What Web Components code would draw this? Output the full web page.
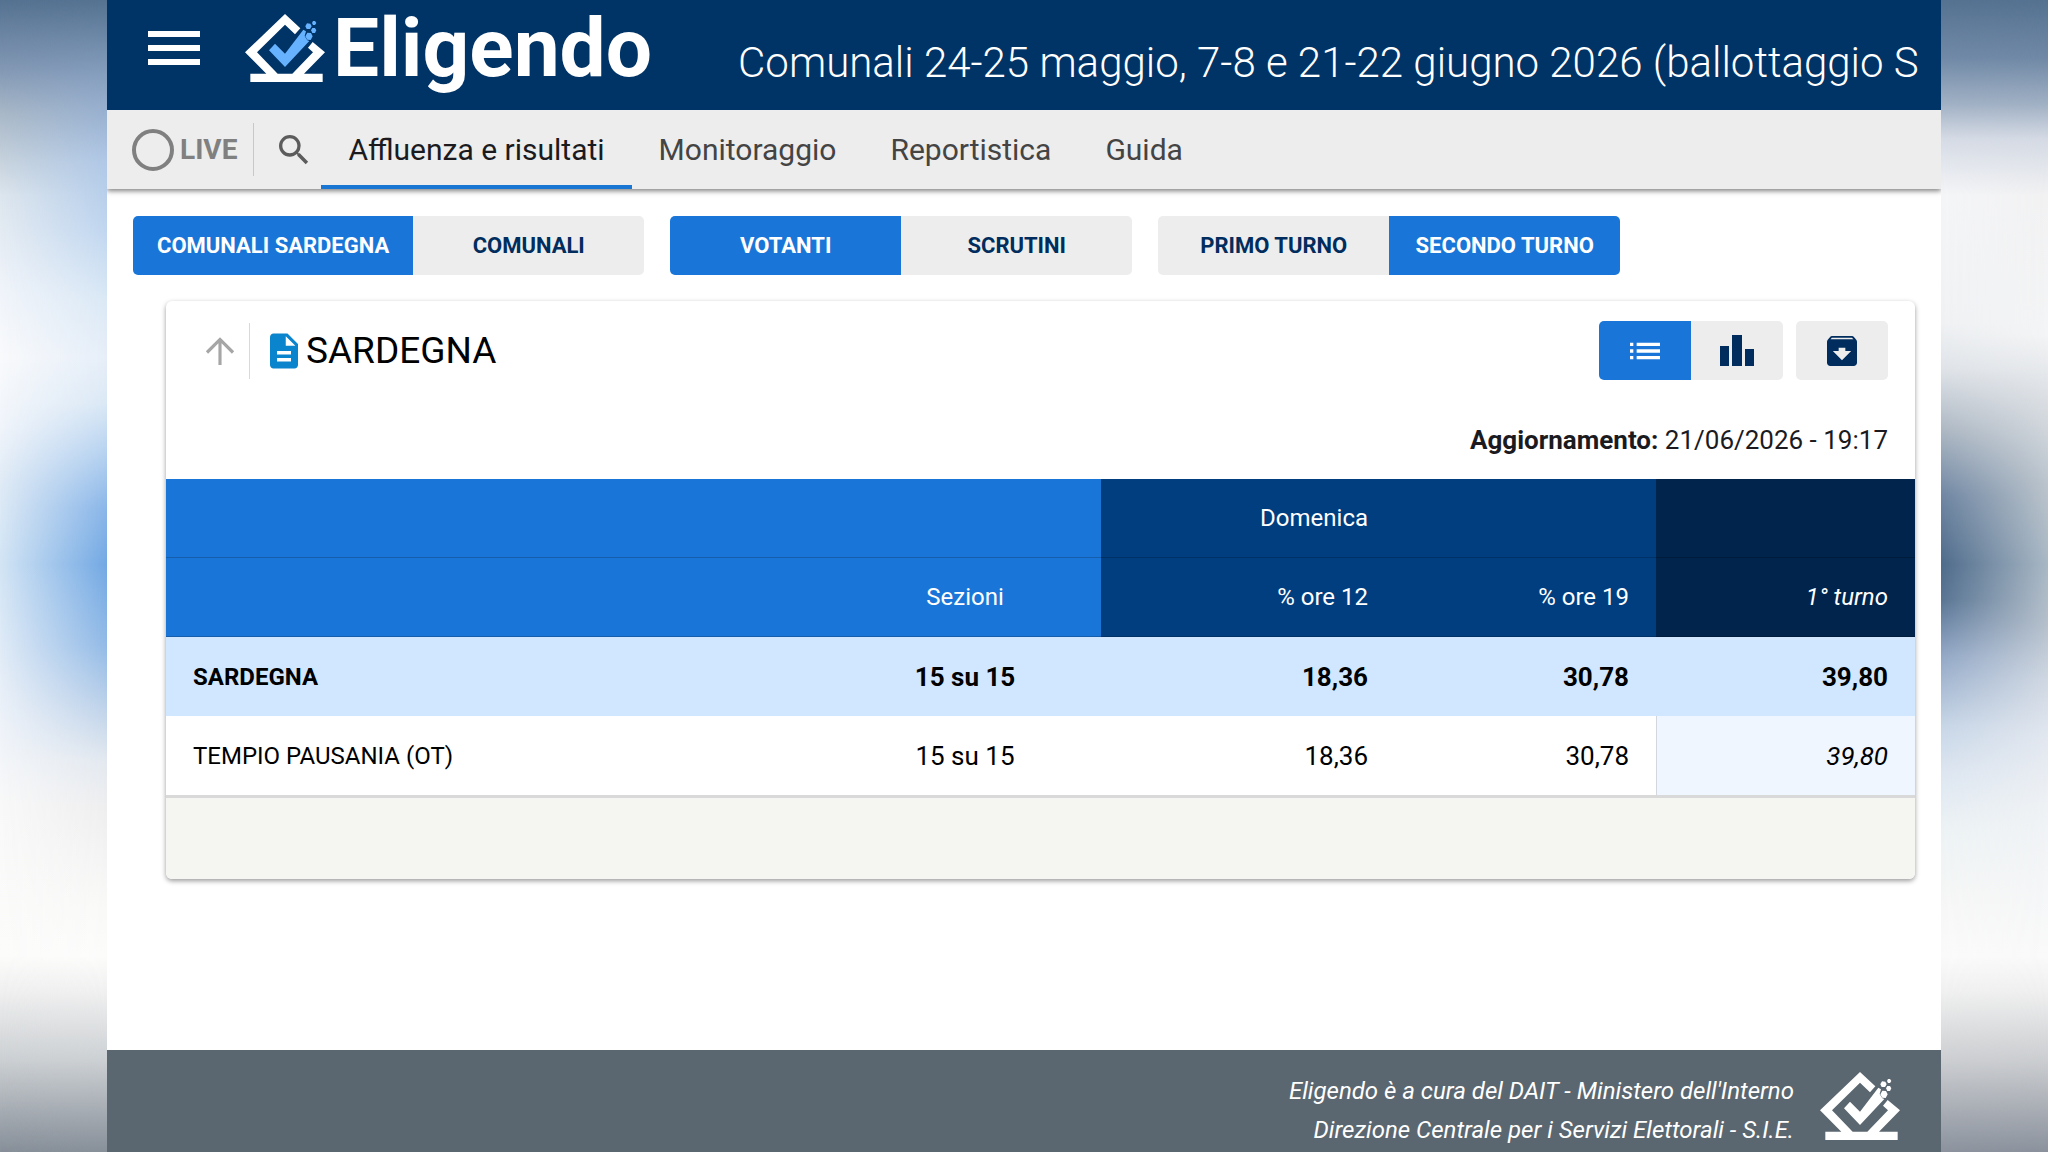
<!DOCTYPE html>
<html lang="it">
<head>
    <meta charset="utf-8">
    <meta name="viewport" content="width=device-width, initial-scale=1">
    <title>Eligendo</title>
    <style>
        body {
            margin: 0;
            font-family: Roboto, "Liberation Sans", sans-serif;
            font-size: 26px;
            color: #1b1b1f;
            background: #fff;
        }
    </style>
</head>
<body>
    <page-shell>
        <app-header slot="header" heading="Comunali 24-25 maggio, 7-8 e 21-22 giugno 2026 (ballottaggio S"></app-header>
        <nav-bar slot="nav">
            <nav-tab active>Affluenza e risultati</nav-tab>
            <nav-tab>Monitoraggio</nav-tab>
            <nav-tab>Reportistica</nav-tab>
            <nav-tab>Guida</nav-tab>
        </nav-bar>
        <filter-bar>
            <toggle-group>
                <toggle-button active>COMUNALI SARDEGNA</toggle-button>
                <toggle-button>COMUNALI</toggle-button>
            </toggle-group>
            <toggle-group>
                <toggle-button active>VOTANTI</toggle-button>
                <toggle-button>SCRUTINI</toggle-button>
            </toggle-group>
            <toggle-group>
                <toggle-button>PRIMO TURNO</toggle-button>
                <toggle-button active>SECONDO TURNO</toggle-button>
            </toggle-group>
        </filter-bar>
        <result-card heading="SARDEGNA" updated="21/06/2026 - 19:17">
            <turnout-table></turnout-table>
        </result-card>
        <app-footer slot="footer"></app-footer>
    </page-shell>

    <script>
        class PageShell extends HTMLElement {
            constructor() {
                super();
                this.attachShadow({ mode: "open" });
                this.shadowRoot.innerHTML = `
                <style>
                :host {
                    display: grid;
                    grid-template-columns: 107px minmax(0, 1fr) 107px;
                    min-height: 100vh;
                }
                .page {
                    display: flex;
                    flex-direction: column;
                    background: #fff;
                }
                main {
                    flex: 1;
                }
                </style>
                <side-glow side="left"></side-glow>
                <div class="page">
                    <slot name="header"></slot>
                    <slot name="nav"></slot>
                    <main><slot></slot></main>
                    <slot name="footer"></slot>
                </div>
                <side-glow side="right"></side-glow>
                `;
            }
        }

        // soft colour bands at both sides of the page: an outer gradient,
        // and an inner one that fades out away from the page
        class SideGlow extends HTMLElement {
            constructor() {
                super();
                this.attachShadow({ mode: "open" });
                this.shadowRoot.innerHTML = `
                <style>
                :host {
                    display: grid;
                    background: linear-gradient(#557291, #8298b4 6%, #aab9c8 10%, #dde6ee 17%, #f0f4fa 25%, #f9fafc 31%,
                        #f1f5fb 37%, #e0ebf6 42%, #d3e5f5 49%, #e0ebf7 56%, #eff3f9 63%, #f9f9f9 70%, #fcfcfb 83%,
                        #f0f0f0 86%, #ccd0d3 92%, #878f99);
                }
                .inner {
                    background: linear-gradient(#557291, #8aa2c2 7%, #b0c8e6 14%, #c0d6ef 20%, #dae8f5 26%, #e6eef8 31%,
                        #dae8f5 35%, #b8d3f0 39%, #8ab6e8 44%, #72a8e3 49%, #92bae6 56%, #bad0e9 61%, #e2e8ef 66%,
                        #eeeeef 70%, #f8f8f7 78%, #fcfcfb 83%, #f0f0f0 86%, #ccd0d3 92%, #878f99);
                    -webkit-mask-image: linear-gradient(to left, #000, transparent);
                    mask-image: linear-gradient(to left, #000, transparent);
                }
                :host([side="right"]) {
                    background: linear-gradient(#557291, #7089a6 5%, #a0b0c4 9%, #d4dae4 12%, #f2f2f3 17%, #f4f5f6 29%,
                        #dadee3 35%, #bcc5cd 42%, #a9b8c5 49%, #b5c0cc 54%, #d0d8e3 59%, #e3e8f0 64%, #eff2f5 70%,
                        #fafafa 83%, #f0f0f0 86%, #ccced1 92%, #8b929d);
                }
                :host([side="right"]) .inner {
                    background: linear-gradient(#557291, #7089a6 5%, #a0b0c4 9%, #d4dae4 12%, #f4f5f7 17%, #eff1f3 28%,
                        #dfe3e8 32%, #b0bac5 37%, #6f86a2 43%, #4e6b8b 49%, #587493 52%, #93a8c6 57%, #c6d5e6 63%,
                        #dce5f0 67%, #ecf2f4 72%, #f5f6f5 78%, #fafafa 83%, #f0f0f0 86%, #ccced1 92%, #8b929d);
                    -webkit-mask-image: linear-gradient(to right, #000, transparent);
                    mask-image: linear-gradient(to right, #000, transparent);
                }
                </style>
                <div class="inner"></div>
                `;
            }
        }

        class BrandMark extends HTMLElement {
            constructor() {
                super();
                this.attachShadow({ mode: "open" });
                this.shadowRoot.innerHTML = `
                <style>
                :host {
                    display: block;
                    width: 80px;
                    height: 68px;
                    flex: none;
                }
                svg {
                    display: block;
                    width: 100%;
                    height: 100%;
                }
                .tick {
                    fill: var(--tick-color, #fff);
                }
                </style>
                <svg viewBox="30 28 240 204" aria-hidden="true">
                    <path fill="#fff" d="M46 207H94L30 143 150 28 196 71 180 89 150 60 66 143 128 207H172L234 143 219 129 233 112 270 143 207 207H263V232H46Z"/>
                    <g class="tick">
                        <path d="M102 137 120 117 150 147 205 75 213 80 209 94 217 107 223 109 150 187Z"/>
                        <path d="M216 56 226 57 230 65 225 73 215 73 211 65Z"/>
                        <path d="M234 49 240 49 244 55 240 61 234 61 231 55Z"/>
                        <path d="M232 70 240 70 244 77 240 85 232 85 228 77Z"/>
                        <path d="M217 84 228 85 233 95 227 106 217 105 211 95Z"/>
                    </g>
                </svg>
                `;
            }
        }

        class AppHeader extends HTMLElement {
            constructor() {
                super();
                this.attachShadow({ mode: "open" });
                this.shadowRoot.innerHTML = `
                <style>
                :host {
                    display: block;
                    background: #003366;
                    color: #fff;
                }
                header {
                    display: flex;
                    align-items: center;
                    height: 110px;
                    padding: 0 20px 0 41px;
                    box-sizing: border-box;
                }
                button {
                    display: flex;
                    flex-direction: column;
                    gap: 8px;
                    width: 52px;
                    margin-right: 45px;
                    margin-bottom: 14px;
                    padding: 0;
                    border: 0;
                    background: none;
                    flex: none;
                }
                button span {
                    height: 6px;
                    background: #fff;
                }
                .brand {
                    display: flex;
                    align-items: center;
                    gap: 8px;
                    color: inherit;
                    text-decoration: none;
                    margin-bottom: 14px;
                }
                .brand b {
                    font-size: 82px;
                    line-height: 68px;
                }
                brand-mark {
                    --tick-color: #66b2ff;
                }
                h1 {
                    flex: 1;
                    min-width: 0;
                    margin: 16px 0 0 86px;
                    overflow: hidden;
                    white-space: nowrap;
                    font-size: 42px;
                    font-weight: 300;
                    line-height: 56px;
                }
                </style>
                <header>
                    <button type="button" aria-label="Menu"><span></span><span></span><span></span></button>
                    <a class="brand" href="#"><brand-mark></brand-mark><b>Eligendo</b></a>
                    <h1></h1>
                </header>
                `;
            }

            connectedCallback() {
                this.shadowRoot.querySelector("h1").textContent = this.getAttribute("heading");
            }
        }

        class NavBar extends HTMLElement {
            constructor() {
                super();
                this.attachShadow({ mode: "open" });
                this.shadowRoot.innerHTML = `
                <style>
                :host {
                    display: block;
                    background: #ededed;
                    box-shadow: 0 2px 5px rgba(0,0,0,0.5);
                    clip-path: inset(0 0 -10px 0);
                }
                nav {
                    display: flex;
                    align-items: stretch;
                    height: 79px;
                    padding-left: 25px;
                }
                .live {
                    display: flex;
                    align-items: center;
                    gap: 6px;
                    color: #808080;
                    font-size: 28px;
                    font-weight: 700;
                }
                .live i {
                    width: 42px;
                    height: 42px;
                    box-sizing: border-box;
                    border: 4px solid #808080;
                    border-radius: 50%;
                }
                .search {
                    display: flex;
                    align-items: center;
                    margin: 13px 7px 13px 16px;
                    padding: 0 0 0 20px;
                    border: 0;
                    border-left: 1px solid #c8c8c8;
                    background: none;
                }
                svg {
                    display: block;
                    width: 40px;
                    height: 40px;
                    fill: #5c5c5c;
                }
                </style>
                <nav>
                    <div class="live"><i></i>LIVE</div>
                    <button class="search" type="button" aria-label="Cerca">
                        <svg viewBox="0 0 24 24" aria-hidden="true"><path d="M15.5 14h-.79l-.28-.27A6.47 6.47 0 0 0 16 9.5 6.5 6.5 0 1 0 9.5 16c1.61 0 3.09-.59 4.23-1.57l.27.28v.79l5 4.99L20.49 19l-4.99-5zm-6 0C7.01 14 5 11.99 5 9.5S7.01 5 9.5 5 14 7.01 14 9.5 11.99 14 9.5 14z"/></svg>
                    </button>
                    <slot></slot>
                </nav>
                `;
            }
        }

        class NavTab extends HTMLElement {
            constructor() {
                super();
                this.attachShadow({ mode: "open" });
                this.shadowRoot.innerHTML = `
                <style>
                :host {
                    display: flex;
                }
                a {
                    display: flex;
                    align-items: center;
                    padding: 4px 27px 0;
                    border-bottom: 4px solid transparent;
                    color: #444;
                    font-size: 30px;
                    text-decoration: none;
                }
                :host([active]) a {
                    color: #1b1b1f;
                    border-color: #1976d2;
                }
                </style>
                <a href="#"><slot></slot></a>
                `;
            }
        }

        class FilterBar extends HTMLElement {
            constructor() {
                super();
                this.attachShadow({ mode: "open" });
                this.shadowRoot.innerHTML = `
                <style>
                :host {
                    display: flex;
                    flex-wrap: wrap;
                    gap: 26px;
                    padding: 27px 26px 26px;
                }
                </style>
                <slot></slot>
                `;
            }
        }

        class ToggleGroup extends HTMLElement {
            constructor() {
                super();
                this.attachShadow({ mode: "open" });
                this.shadowRoot.innerHTML = `
                <style>
                :host {
                    display: flex;
                    border-radius: 5px;
                    overflow: hidden;
                }
                </style>
                <slot></slot>
                `;
            }
        }

        class ToggleButton extends HTMLElement {
            constructor() {
                super();
                this.attachShadow({ mode: "open" });
                this.shadowRoot.innerHTML = `
                <style>
                :host {
                    display: block;
                }
                button {
                    display: flex;
                    align-items: center;
                    justify-content: center;
                    min-width: var(--toggle-width, 231px);
                    height: 59px;
                    padding: 0 24px;
                    border: 0;
                    background: #ededed;
                    color: #002d5e;
                    font: 700 22px Roboto, "Liberation Sans", sans-serif;
                }
                :host([active]) button {
                    background: #1976d8;
                    color: #fff;
                }
                </style>
                <button type="button"><slot></slot></button>
                `;
            }

            connectedCallback() {
                const button = this.shadowRoot.querySelector("button");
                button.setAttribute("aria-pressed", this.hasAttribute("active"));
                this.hasAttribute("label") ?
                    button.setAttribute("aria-label", this.getAttribute("label")) : null;
            }
        }

        class ResultCard extends HTMLElement {
            constructor() {
                super();
                this.attachShadow({ mode: "open" });
                this.shadowRoot.innerHTML = `
                <style>
                :host {
                    display: block;
                    margin: 0 26px 0 59px;
                    border-radius: 6px;
                    overflow: hidden;
                    background: #fff;
                    box-shadow: 0 2px 5px rgba(0,0,0,0.4);
                }
                .head {
                    display: flex;
                    align-items: center;
                    padding: 20px 27px 0 33px;
                }
                .up {
                    height: 56px;
                    padding: 0 8px 0 0;
                    border: 0;
                    border-right: 1px solid #d9d9d9;
                    background: none;
                }
                svg {
                    display: block;
                    fill: currentColor;
                }
                .up svg {
                    color: #a6a6a6;
                }
                .doc {
                    color: #0a84cc;
                    margin: 0 1px 0 13px;
                }
                h2 {
                    margin: 0;
                    color: #000;
                    font-size: 37px;
                    font-weight: 400;
                    line-height: 56px;
                }
                .tools {
                    display: flex;
                    gap: 13px;
                    margin-left: auto;
                    --toggle-width: 92px;
                }
                .updated {
                    margin: 0;
                    padding: 40px 27px 19px;
                    text-align: right;
                    line-height: 40px;
                }
                .foot {
                    height: 81px;
                    background: #f5f5f1;
                }
                </style>
                <div class="head">
                    <button class="up" type="button" aria-label="Livello superiore">
                        <svg width="42" height="42" viewBox="0 0 24 24" aria-hidden="true"><path d="M3.900 12.200l1.300 1.300 5.900-5.900V20h1.800V7.600l5.900 5.900 1.300-1.300L12 4.200z"/></svg>
                    </button>
                    <svg class="doc" width="42" height="42" viewBox="0 0 24 24" aria-hidden="true"><path d="M14 2H6c-1.100 0-1.990.9-1.990 2L4 20c0 1.100.89 2 1.990 2H18c1.100 0 2-.9 2-2V8l-6-6zm2 16H8v-2h8v2zm0-4H8v-2h8v2zm-3-5V3.500L18.500 9H13z"/></svg>
                    <h2></h2>
                    <div class="tools">
                        <toggle-group>
                            <toggle-button active label="Tabella">
                                <svg width="40" height="40" viewBox="0 0 24 24" aria-hidden="true"><path d="M3 13h2v-2H3v2zm0 4h2v-2H3v2zm0-8h2V7H3v2zm4 4h14v-2H7v2zm0 4h14v-2H7v2zM7 7v2h14V7H7z"/></svg>
                            </toggle-button>
                            <toggle-button label="Grafico">
                                <svg width="34" height="31" viewBox="0 0 34 31" aria-hidden="true"><path d="M0 11h9v20H0zM12 0h10v31H12zM25 14h9v17h-9z"/></svg>
                            </toggle-button>
                        </toggle-group>
                        <toggle-group>
                            <toggle-button label="Scarica">
                                <svg width="40" height="40" viewBox="0 0 24 24" aria-hidden="true"><path d="M20.540 5.230l-1.390-1.680C18.880 3.210 18.470 3 18 3H6c-.47 0-.88.21-1.160.55L3.460 5.230C3.170 5.570 3 6.020 3 6.500V19c0 1.100.9 2 2 2h14c1.100 0 2-.9 2-2V6.500c0-.48-.17-.93-.46-1.270zM12 17.500L6.500 12H10v-2h4v2h3.500L12 17.500zM5.120 5l.81-1h12l.94 1H5.120z"/></svg>
                            </toggle-button>
                        </toggle-group>
                    </div>
                </div>
                <p class="updated"><b>Aggiornamento:</b> <span></span></p>
                <slot></slot>
                <div class="foot"></div>
                `;
            }

            connectedCallback() {
                this.shadowRoot.querySelector("h2").textContent = this.getAttribute("heading");
                this.shadowRoot.querySelector(".updated span").textContent = this.getAttribute("updated");
            }
        }

        class TurnoutTable extends HTMLElement {
            constructor() {
                super();
                this.attachShadow({ mode: "open" });
                this.shadowRoot.innerHTML = `
                <style>
                :host {
                    display: block;
                }
                table {
                    width: 100%;
                    table-layout: fixed;
                    border-collapse: separate;
                    border-spacing: 0;
                    color: #000;
                    border-bottom: 3px solid #d9d9d9;
                }
                .sections { width: 272px; }
                .noon { width: 294px; }
                .evening { width: 261px; }
                .first { width: 259px; }
                th, td {
                    height: 79px;
                    box-sizing: border-box;
                    padding: 0 27px;
                    text-align: right;
                    font-weight: 400;
                }
                th {
                    background: #1976d8;
                    color: #fff;
                    font-size: 24px;
                    border-bottom: 1px solid rgba(0,0,0,0.2);
                }
                .day {
                    background: #003e80;
                }
                .prev {
                    background: #00244c;
                    font-style: italic;
                }
                td:first-child {
                    font-size: 24px;
                    text-align: left;
                }
                td:nth-child(2), .mid {
                    text-align: center;
                }
                .total td {
                    background: #d1e7ff;
                    font-weight: 700;
                }
                .place td:last-child {
                    background: #f0f6ff;
                    border-left: 1px solid #d3d7de;
                    font-style: italic;
                }
                </style>
                <table>
                    <colgroup><col><col class="sections"><col class="noon"><col class="evening"><col class="first"></colgroup>
                    <thead>
                        <tr><th></th><th></th><th class="day">Domenica</th><th class="day"></th><th class="prev"></th></tr>
                        <tr><th></th><th class="mid">Sezioni</th><th class="day">% ore 12</th><th class="day">% ore 19</th><th class="prev">1° turno</th></tr>
                    </thead>
                    <tbody>
                        <tr class="total"><td>SARDEGNA</td><td>15 su 15</td><td>18,36</td><td>30,78</td><td>39,80</td></tr>
                        <tr class="place"><td>TEMPIO PAUSANIA (OT)</td><td>15 su 15</td><td>18,36</td><td>30,78</td><td>39,80</td></tr>
                    </tbody>
                </table>
                `;
            }
        }

        class AppFooter extends HTMLElement {
            constructor() {
                super();
                this.attachShadow({ mode: "open" });
                this.shadowRoot.innerHTML = `
                <style>
                :host {
                    display: block;
                    background: #5b6770;
                    color: #fff;
                }
                footer {
                    display: flex;
                    justify-content: flex-end;
                    gap: 26px;
                    padding: 22px 41px 2px;
                }
                p {
                    margin: 0;
                    text-align: right;
                    font-size: 24px;
                    font-style: italic;
                    line-height: 39px;
                }
                </style>
                <footer>
                    <p>Eligendo è a cura del DAIT - Ministero dell'Interno<br>Direzione Centrale per i Servizi Elettorali - S.I.E.</p>
                    <brand-mark></brand-mark>
                </footer>
                `;
            }
        }

        customElements.define("page-shell", PageShell);
        customElements.define("side-glow", SideGlow);
        customElements.define("brand-mark", BrandMark);
        customElements.define("app-header", AppHeader);
        customElements.define("nav-bar", NavBar);
        customElements.define("nav-tab", NavTab);
        customElements.define("filter-bar", FilterBar);
        customElements.define("toggle-group", ToggleGroup);
        customElements.define("toggle-button", ToggleButton);
        customElements.define("result-card", ResultCard);
        customElements.define("turnout-table", TurnoutTable);
        customElements.define("app-footer", AppFooter);
    </script>
</body>
</html>
